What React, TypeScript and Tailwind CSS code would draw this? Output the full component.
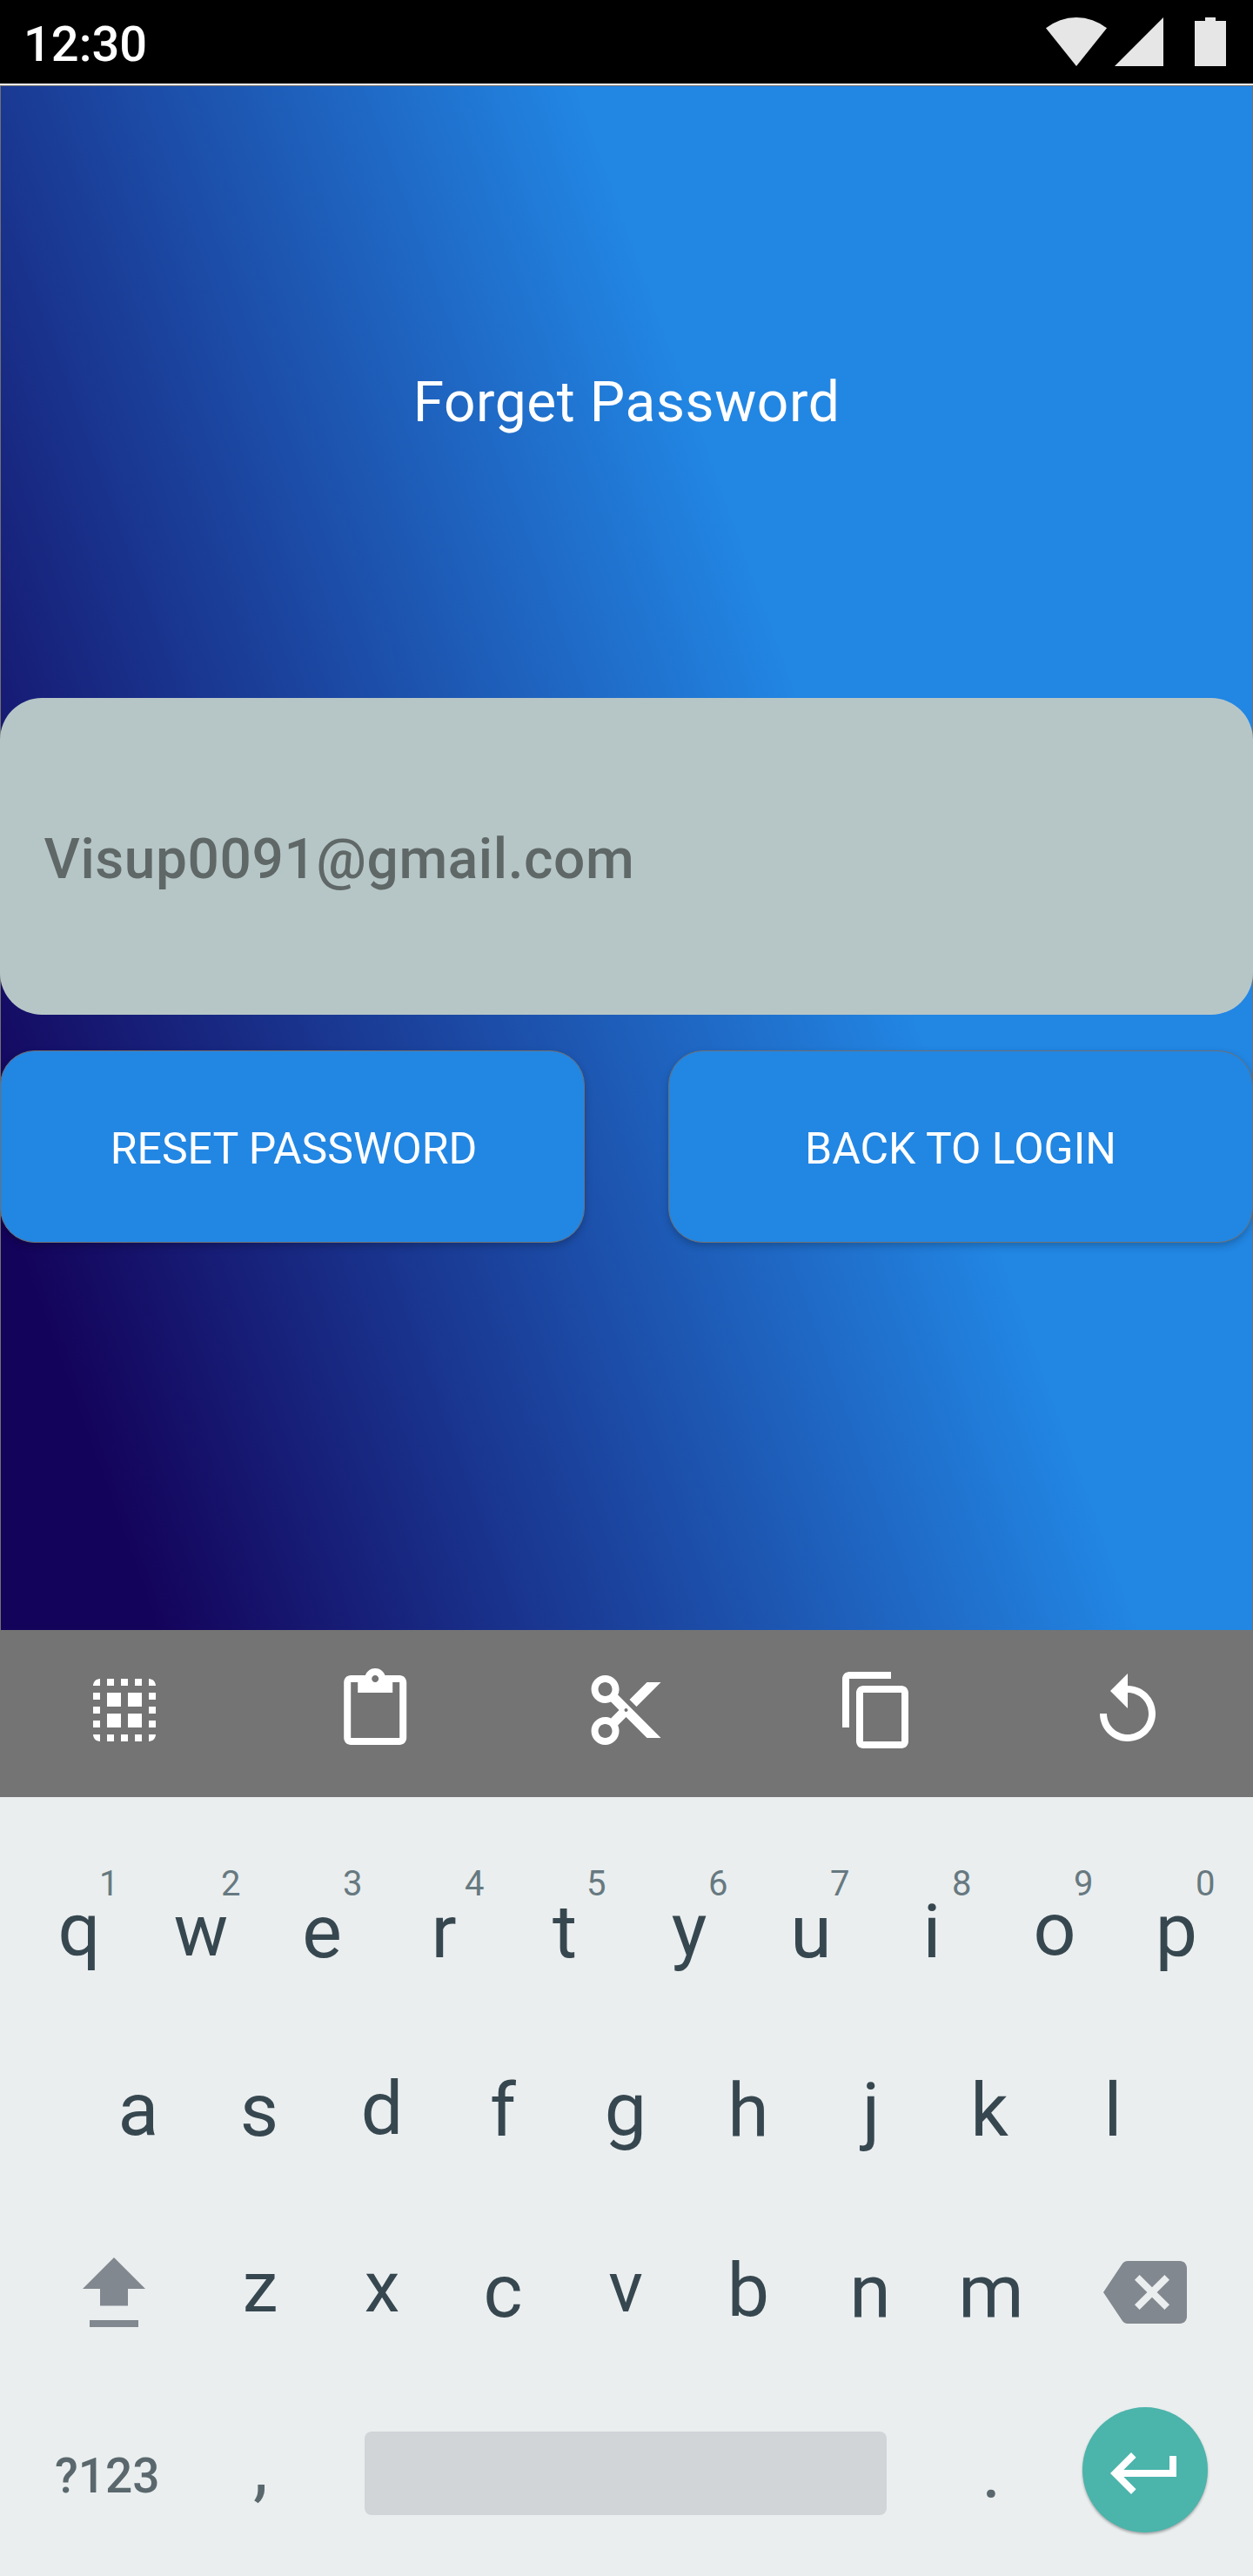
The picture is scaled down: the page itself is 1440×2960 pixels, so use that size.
import type { ReactNode } from "react";

type Key = { label: string; hint?: string; tweak?: string };

const ROW_ONE: Key[] = [
  { label: "q", hint: "1", tweak: "-translate-y-[2px]" },
  { label: "w", hint: "2", tweak: "-translate-y-px text-[83px]" },
  { label: "e", hint: "3", tweak: "-translate-x-px" },
  { label: "r", hint: "4", tweak: "-translate-x-px" },
  { label: "t", hint: "5", tweak: "-translate-x-[2px]" },
  { label: "y", hint: "6", tweak: "translate-x-px -translate-y-[2px]" },
  { label: "u", hint: "7", tweak: "translate-x-px" },
  { label: "i", hint: "8" },
  { label: "o", hint: "9", tweak: "translate-x-px -translate-y-[3px]" },
  { label: "p", hint: "0", tweak: "translate-x-px -translate-y-px" },
];

const ROW_TWO: Key[] = [
  { label: "a", tweak: "-translate-y-px" },
  { label: "s", tweak: "-translate-x-px" },
  { label: "d", tweak: "-translate-y-[2px]" },
  { label: "f", tweak: "-translate-x-px" },
  { label: "g", tweak: "-translate-y-px" },
  { label: "h", tweak: "translate-x-px" },
  { label: "j", tweak: "translate-x-[2px]" },
  { label: "k", tweak: "-translate-x-[2px]" },
  { label: "l" },
];

const ROW_THREE: Key[] = [
  { label: "z", tweak: "-translate-y-1 text-[82px]" },
  { label: "x", tweak: "-translate-y-1 text-[82px]" },
  { label: "c", tweak: "-translate-x-px" },
  { label: "v", tweak: "-translate-y-1 text-[82px]" },
  { label: "b", tweak: "translate-x-px -translate-y-px" },
  { label: "n", tweak: "translate-x-px" },
  { label: "m" },
];

function LetterKey({ label, hint, tweak = "" }: Key) {
  return (
    <div className="relative flex h-full w-[140px] items-center justify-center text-[86px] leading-[71px] text-[#37474f]">
      <span className={tweak}>{label}</span>
      {hint && (
        <span className="absolute left-[93px] top-[29px] text-[40px] leading-[41px] text-[#677980]">{hint}</span>
      )}
    </div>
  );
}

function ToolIcon({ children }: { children: ReactNode }) {
  return (
    <div className="flex justify-center">
      <svg viewBox="0 0 24 24" className="size-24 fill-white">
        {children}
      </svg>
    </div>
  );
}

function StatusBar() {
  return (
    <header className="flex h-[98px] items-start justify-between border-b-2 border-white bg-black pl-[27px] pr-[31px]">
      <span className="mt-[18px] text-[56px] leading-[66px] font-medium text-white">12:30</span>
      <div className="mt-5 flex fill-[#e6e6e6]">
        <svg viewBox="0 0 70 56" className="h-14 w-[70px]">
          <path d="M35 56L0 12.3A56 56 0 0 1 70 12.3z" />
        </svg>
        <svg viewBox="0 0 56 56" className="ml-[9px] size-14">
          <path d="M0 56L56 0V56z" />
        </svg>
        <svg viewBox="0 0 36 56" className="ml-9 h-14 w-9">
          <path d="M12 0H24V4H36V56H0V4H12z" />
        </svg>
      </div>
    </header>
  );
}

function ActionButton({ children }: { children: ReactNode }) {
  return (
    <button className="flex h-[221px] w-[672px] items-start justify-center rounded-[40px] border border-[#707070] bg-[#2286e3] pt-[83px] text-[50px] leading-[58px] text-white shadow-[0_4px_8px_rgba(0,0,0,0.22)]">
      {children}
    </button>
  );
}

export default function App() {
  return (
    <div className="flex h-[2960px] w-[1440px] flex-col overflow-hidden bg-white font-[Roboto,sans-serif]">
      <StatusBar />

      <main className="flex h-[1775px] flex-col border-x border-t border-[#707070] bg-[linear-gradient(70deg,#14035b_8.6%,#2286e3_62.8%)]">
        <h1 className="mt-[326px] text-center text-[64px] leading-[75px] tracking-[0.6px] text-white">Forget Password</h1>
        <div className="-mx-px mt-[302px] h-[364px] rounded-[48px] bg-[#b6c6c7] pl-[50.5px] pt-[148px] text-[64px] leading-[75px] font-medium tracking-[0.6px] text-[#5f6867]">
          Visup0091@gmail.com
        </div>
        <div className="-mx-px mt-[41px] flex justify-between">
          <ActionButton>
            <span className="ml-[3px]">RESET PASSWORD</span>
          </ActionButton>
          <ActionButton>BACK TO LOGIN</ActionButton>
        </div>
      </main>

      <div className="grid h-48 grid-cols-5 bg-[#747474] pt-11">
        <ToolIcon>
          <path
            transform="translate(-0.25 0)"
            d="M3 5h2V3c-1.1 0-2 .9-2 2zm0 8h2v-2H3v2zm4 8h2v-2H7v2zM3 9h2V7H3v2zm10-6h-2v2h2V3zm6 0v2h2c0-1.1-.9-2-2-2zM5 21v-2H3c0 1.1.9 2 2 2zm-2-4h2v-2H3v2zM9 3H7v2h2V3zm2 18h2v-2h-2v2zm8-8h2v-2h-2v2zm0 8c1.1 0 2-.9 2-2h-2v2zm0-12h2V7h-2v2zm0 8h2v-2h-2v2zm-4 4h2v-2h-2v2zm0-16h2V3h-2v2zM7 7h4v4H7zM13 7h4v4h-4zM7 13h4v4H7zM13 13h4v4h-4z"
          />
        </ToolIcon>
        <ToolIcon>
          <path
            transform="translate(-0.2 0)"
            d="M19 2h-4.18C14.4.84 13.3 0 12 0c-1.3 0-2.4.84-2.82 2H5c-1.1 0-2 .9-2 2v16c0 1.1.9 2 2 2h14c1.1 0 2-.9 2-2V4c0-1.1-.9-2-2-2zm-7 0c.55 0 1 .45 1 1s-.45 1-1 1-1-.45-1-1 .45-1 1-1zm7 18H5V4h2v3h10V4h2v16z"
          />
        </ToolIcon>
        <ToolIcon>
          <path
            transform="translate(-0.12 0)"
            d="M9.64 7.64c.23-.5.36-1.05.36-1.64 0-2.21-1.79-4-4-4S2 3.79 2 6s1.79 4 4 4c.59 0 1.14-.13 1.64-.36L10 12l-2.36 2.36C7.14 14.13 6.59 14 6 14c-2.21 0-4 1.79-4 4s1.79 4 4 4 4-1.79 4-4c0-.59-.13-1.14-.36-1.64L12 14l6 6h4L9.64 7.64zM6 8c-1.1 0-2-.89-2-2s.9-2 2-2 2 .89 2 2-.9 2-2 2zm0 12c-1.1 0-2-.89-2-2s.9-2 2-2 2 .89 2 2-.9 2-2 2zm6-7.5c-.28 0-.5-.22-.5-.5s.22-.5.5-.5.5.22.5.5-.22.5-.5.5zM18 4l-5 5 2 2 7-7z"
          />
        </ToolIcon>
        <ToolIcon>
          <path d="M16 1H4c-1.1 0-2 .9-2 2v14h2V3h12V1zm3 4H8c-1.1 0-2 .9-2 2v14c0 1.1.9 2 2 2h11c1.1 0 2-.9 2-2V7c0-1.1-.9-2-2-2zm0 16H8V7h11v14z" />
        </ToolIcon>
        <ToolIcon>
          <path d="M12 5V1.5L7 6.5l5 5V7c3.31 0 6 2.69 6 6s-2.69 6-6 6-6-2.69-6-6H4c0 4.42 3.58 8 8 8s8-3.58 8-8-3.58-8-8-8z" />
        </ToolIcon>
      </div>

      <section className="flex flex-1 flex-col bg-[#eaeeef] pt-[50px]">
        <div className="flex h-[209px] pl-[21px]">
          {ROW_ONE.map((key) => (
            <LetterKey key={key.label} {...key} />
          ))}
        </div>
        <div className="flex h-[201px] pl-[89px]">
          {ROW_TWO.map((key) => (
            <LetterKey key={key.label} {...key} />
          ))}
        </div>
        <div className="flex h-[215px] items-center">
          <div className="w-[229px] pl-[95px] pt-[3px]">
            <svg viewBox="0 0 72 80" className="h-20 w-[72px] fill-[#81888f]">
              <path d="M36 0L72 36H52V55.5H20V36H0zM8 72H64V80H8z" />
            </svg>
          </div>
          {ROW_THREE.map((key) => (
            <LetterKey key={key.label} {...key} />
          ))}
          <svg viewBox="0 0 24 24" className="ml-[58.5px] mt-[2px] size-24 fill-[#81888f]">
            <path d="M22 3H7c-.69 0-1.23.35-1.59.88L0 12l5.41 8.11c.36.53.9.89 1.59.89h15c1.1 0 2-.9 2-2V5c0-1.1-.9-2-2-2zm-3 12.59L17.59 17 14 13.41 10.41 17 9 15.59 12.59 12 9 8.41 10.41 7 14 10.59 17.59 7 19 8.41 15.41 12 19 15.59z" />
          </svg>
        </div>
        <div className="flex items-start text-[#5a686d]">
          <span className="mt-[73px] w-[229px] pl-[63px] text-[55px] leading-[64px] font-medium">?123</span>
          <span className="mt-11 w-[190px] pl-[62px] text-[86px] leading-[101px]">,</span>
          <div className="mt-[54px] h-24 w-[600px] rounded-lg bg-[#d1d5d8]" />
          <span className="mt-[50px] w-[225px] pl-[109px] text-[86px] leading-[101px]">.</span>
          <div className="mt-[26px] flex size-36 items-center justify-center rounded-full bg-[#4bb4ab] shadow-[0_2px_3px_rgba(0,0,0,0.3)]">
            <svg viewBox="0 0 24 24" className="mt-2 size-24 fill-white">
              <path d="M19 7v4H5.83l3.58-3.59L8 6l-6 6 6 6 1.41-1.41L5.83 13H21V7z" />
            </svg>
          </div>
        </div>
      </section>
    </div>
  );
}
